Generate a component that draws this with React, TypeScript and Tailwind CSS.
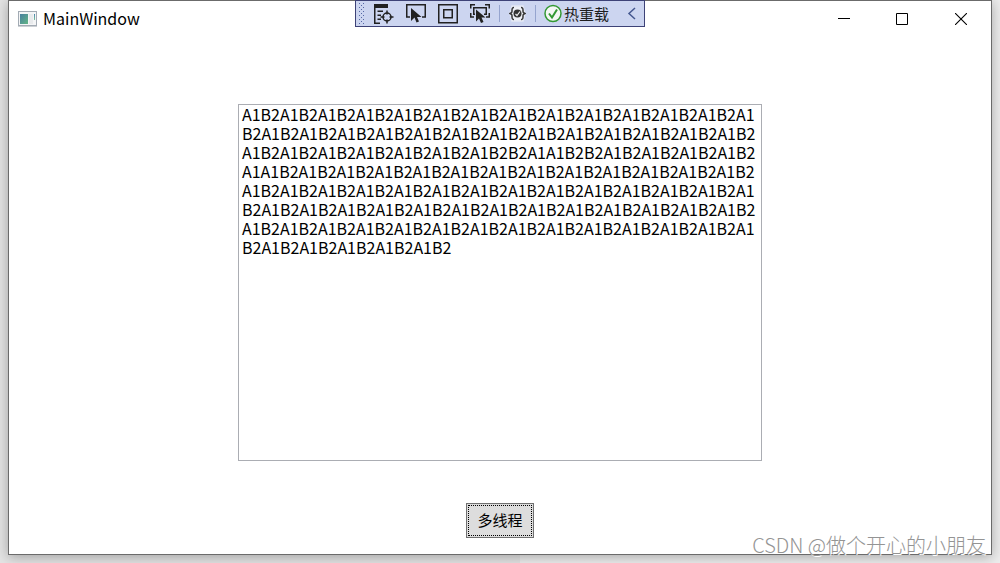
import type { ReactNode } from "react"

const LINES = [
    "A1B2".repeat(13) + "A1",
    "B2" + "A1B2".repeat(13),
    "A1B2".repeat(7) + "B2A1A1B2B2" + "A1B2".repeat(4),
    "A1" + "A1B2".repeat(13),
    "A1B2".repeat(13) + "A1",
    "B2" + "A1B2".repeat(13),
    "A1B2".repeat(13) + "A1",
    "B2" + "A1B2".repeat(5),
]

function ToolButton({ label, children }: { label: string; children: ReactNode }) {
    return (
        <button type="button" aria-label={label} className="flex h-[25px] w-8 items-center justify-center">
            <svg width="22" height="21" fill="none" stroke="#212121" strokeWidth="1.5">
                {children}
            </svg>
        </button>
    )
}

function DebugToolbar() {
    return (
        <div className="flex h-[27px] w-[290px] items-center border border-[#3d4277] bg-[#ccd5f0]">
            {/* Drag handle */}
            <svg width="12" height="25" className="shrink-0">
                <defs>
                    <pattern id="grip" x="3" y="2" width="4" height="4" patternUnits="userSpaceOnUse">
                        <path d="M0 0h1v1H0zM2 2h1v1H2z" fill="#5567a5" />
                    </pattern>
                </defs>
                <rect x="3" y="2" width="6" height="21" fill="url(#grip)" />
            </svg>
            <ToolButton label="Live Visual Tree">
                <path d="M1 1h14v4H1z" fill="#212121" stroke="none" />
                <path d="M1.750 4v16.250H7M4.500 8.250H10M4.500 12.250H8M4.500 16.250H8" />
                <circle cx="14" cy="14" r="4" />
                <path d="M14 7.500v4M14 16.500v4M7.500 14h4M16.500 14h4" />
            </ToolButton>
            <ToolButton label="Select Element">
                <path d="M5 14H1.750V1.750h18.500V14H17" />
                <path d="M6 5v13l3.500-3.500 2 5 2.500-1-2-4.500h4.500z" fill="#212121" stroke="none" />
            </ToolButton>
            <ToolButton label="Display Layout Adorners">
                <path d="M1.750 1.750h18.500v18H1.750zM6.750 6.750h8.500v8H6.750z" />
            </ToolButton>
            <ToolButton label="Track Focused Element">
                <path d="M1.750 5.500V1.750H6M16 1.750h4.250V5.500M1.750 10v4H5M17 14h3.250v-4M6 11.250H4.750v-6.500h12.500v6.500H15" />
                <path d="M7 6.500v12l3-3 2 4.500 2.500-1-2-4.500h4z" fill="#212121" stroke="none" />
            </ToolButton>
            <span className="ml-[3px] h-[17px] w-px bg-[#95a4cf]" />
            <button type="button" aria-label="Binding Failures" className="flex h-[25px] w-[35px] items-center justify-center">
                <svg width="17" height="17" fill="none" stroke="#333" strokeWidth="1.5">
                    <path d="M3 1h11l2 7.500-2 7.500H3L1 8.500z" fill="#eef0f6" stroke="#e3e7f4" />
                    <path d="M5 2.500C3 2.500 3 3.500 3 5.500s0 2-2 3c2 1 2 1 2 3s0 3 2 3M12 2.500c2 0 2 1 2 3s0 2 2 3c-2 1-2 1-2 3s0 3-2 3" />
                    <circle cx="8.500" cy="8.500" r="4" fill="#333" stroke="none" />
                    <path d="m6.500 9 1.500 1.500 3-4" stroke="#eee" strokeWidth="1.200" />
                </svg>
            </button>
            <span className="h-[17px] w-px bg-[#95a4cf]" />
            <button type="button" className="ml-2 flex items-center gap-0.5 text-[15px] leading-[19px] text-[#1e1e1e]">
                <svg width="18" height="19" fill="none">
                    <circle cx="9" cy="9.500" r="8" fill="#f4f7f4" stroke="#339933" strokeWidth="1.5" />
                    <path d="m5 9.500 3 4 5-8" stroke="#339933" strokeWidth="2" />
                </svg>
                热重载
            </button>
            <button type="button" aria-label="Collapse toolbar" className="ml-auto flex h-[25px] w-6 items-center justify-center">
                <svg width="10" height="13" fill="none" stroke="#44578f" strokeWidth="1.5">
                    <path d="M8 1 2 6.500 8 12" />
                </svg>
            </button>
        </div>
    )
}

function WindowIcon() {
    return (
        <svg width="19" height="16" className="shrink-0">
            <defs>
                <linearGradient id="pane" x1="0" y1="0" x2="1" y2="1">
                    <stop offset="0" stopColor="#477f9f" />
                    <stop offset="1" stopColor="#62b585" />
                </linearGradient>
                <linearGradient id="strip" x1="0" y1="0" x2="0" y2="1">
                    <stop offset="0" stopColor="#4a84b0" />
                    <stop offset="1" stopColor="#7cc49a" />
                </linearGradient>
            </defs>
            <rect x=".5" y=".5" width="18" height="14" fill="#f4f5f6" stroke="#a3abb4" />
            <path d="M0 15.500h19" stroke="#ccd0d4" />
            <rect x="2" y="3" width="8" height="10" fill="url(#pane)" />
            <rect x="11" y="3" width="4" height="10" fill="#e8eaec" />
            <rect x="16" y="3" width="1" height="6" fill="url(#strip)" />
        </svg>
    )
}

function TitleBar() {
    return (
        <header className="grid h-[37px] shrink-0 grid-cols-[1fr_auto_1fr] items-start">
            <div className="flex h-9 items-center gap-1.5 pl-[9px]">
                <WindowIcon />
                <h1 className="pb-0.5 text-base leading-5">MainWindow</h1>
            </div>
            <div className="-mt-px">
                <DebugToolbar />
            </div>
            <div className="flex justify-end">
                <button type="button" aria-label="Minimize" className="flex h-9 w-[58px] items-center justify-center">
                    <svg width="12" height="12" stroke="#000">
                        <path d="M0 5.500h12" />
                    </svg>
                </button>
                <button type="button" aria-label="Maximize" className="flex h-9 w-[58px] items-center justify-center">
                    <svg width="12" height="12" fill="none" stroke="#000">
                        <path d="M.5.5h11v11H.5z" />
                    </svg>
                </button>
                <button type="button" aria-label="Close" className="flex h-9 w-[60px] items-center justify-center">
                    <svg width="12" height="12" stroke="#000" strokeWidth="1.100">
                        <path d="m0 0 12 12M12 0 0 12" />
                    </svg>
                </button>
            </div>
        </header>
    )
}

export default function App() {
    return (
        <div className="relative flex min-h-screen flex-col bg-linear-to-r from-[#e4e4e4] from-52% to-[#ededed] to-52% px-2 pb-2 font-['Noto_Sans_CJK_SC',sans-serif] text-black">
            <div className="flex flex-1 flex-col border border-[#6b6b6b] bg-white shadow-[0_2px_12px_rgba(0,0,0,0.3)]">
                <TitleBar />
                <main className="flex flex-1 flex-col items-center pt-[66px] pb-4">
                    <textarea
                        aria-label="Output"
                        spellCheck={false}
                        defaultValue={LINES.join("\n")}
                        className="w-[524px] max-w-full flex-1 resize-none overflow-hidden border border-[#abadb3] px-[3px] text-base leading-[19px] outline-none"
                    />
                    <button
                        type="button"
                        className="mt-[42px] h-[35px] border border-[#707070] bg-[#ddd] p-px text-[15px] leading-5"
                    >
                        <span className="flex h-full items-center border border-dotted border-black px-2 pb-0.5">多线程</span>
                    </button>
                </main>
            </div>
            <div className="pointer-events-none absolute right-3.5 bottom-1 text-xl leading-7 font-light text-[#949494] [text-shadow:1px_1px_0_#fff]">
                CSDN @做个开心的小朋友
            </div>
        </div>
    )
}
